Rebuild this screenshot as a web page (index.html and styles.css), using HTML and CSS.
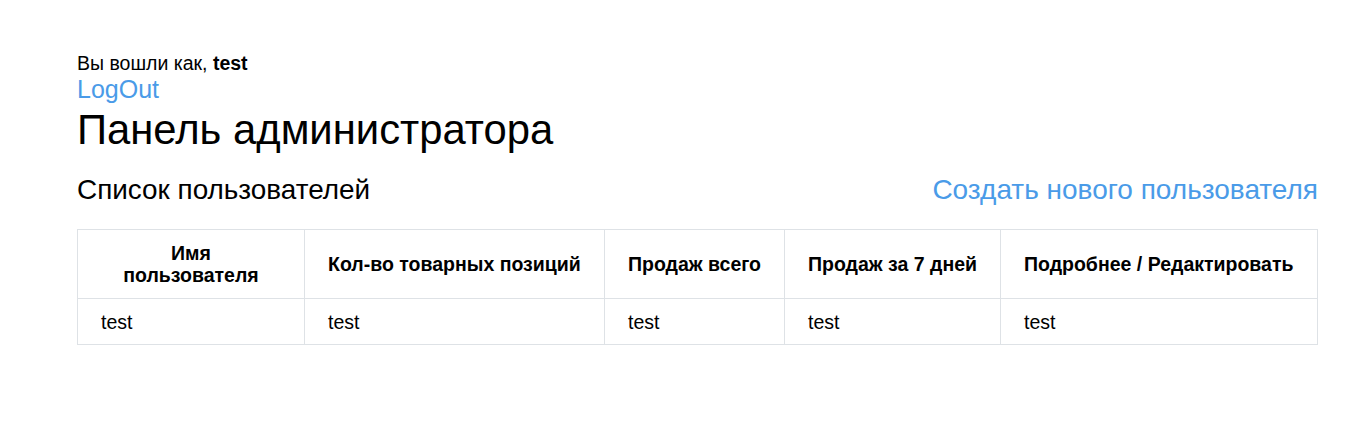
FILE: index.html
```html
<!DOCTYPE html>
<html lang="ru">
<head>
<meta charset="utf-8">
<title>Панель администратора</title>
<link rel="stylesheet" href="styles.css">
</head>
<body>
<div class="page">
  <div class="whoami">Вы вошли как, <b>test</b></div>
  <a class="logout" href="#">LogOut</a>
  <h1 class="title">Панель администратора</h1>
  <div class="list-head">
    <h2 class="subtitle">Список пользователей</h2>
    <a class="create" href="#">Создать нового пользователя</a>
  </div>
  <table class="users">
    <colgroup>
      <col class="c1"><col class="c2"><col class="c3"><col class="c4"><col class="c5">
    </colgroup>
    <thead>
      <tr>
        <th class="center">Имя<br>пользователя</th>
        <th>Кол-во товарных позиций</th>
        <th>Продаж всего</th>
        <th>Продаж за 7 дней</th>
        <th>Подробнее / Редактировать</th>
      </tr>
    </thead>
    <tbody>
      <tr>
        <td>test</td>
        <td>test</td>
        <td>test</td>
        <td>test</td>
        <td>test</td>
      </tr>
    </tbody>
  </table>
</div>
</body>
</html>
```

FILE: styles.css
```css
html, body {
  margin: 0;
  padding: 0;
  background: #fff;
}
body {
  font-family: "Liberation Sans", Arial, sans-serif;
  color: #000;
}
.page {
  padding: 52px 48px 0 77px;
}
.whoami {
  font-size: 19.5px;
  line-height: 22px;
}
.logout {
  display: block;
  width: max-content;
  font-size: 25px;
  line-height: 28px;
  color: #4a9be8;
  text-decoration: none;
  margin-top: 1px;
}
.title {
  margin: 3px 0 0;
  font-size: 41.8px;
  font-weight: normal;
  line-height: 48px;
}
.list-head {
  display: flex;
  justify-content: space-between;
  align-items: baseline;
  margin-top: 20px;
}
.subtitle {
  margin: 0;
  font-size: 27.9px;
  font-weight: normal;
  line-height: 32px;
}
.create {
  font-size: 28px;
  line-height: 32px;
  color: #4a9be8;
  text-decoration: none;
}
.users {
  margin-top: 23px;
  width: 100%;
  border-collapse: collapse;
  font-size: 19.5px;
  table-layout: fixed;
}
.c1 { width: 227px; }
.c2 { width: 300px; }
.c3 { width: 180px; }
.c4 { width: 216px; }
.users th, .users td {
  border: 1px solid #dee2e6;
  text-align: left;
  padding: 0 23px;
  line-height: 22px;
  white-space: nowrap;
}
.users th {
  font-weight: bold;
  padding-top: 12px;
  padding-bottom: 12px;
  height: 44px;
}
.users th.center {
  text-align: center;
}
.users td {
  padding-top: 12px;
  padding-bottom: 11px;
}
```
